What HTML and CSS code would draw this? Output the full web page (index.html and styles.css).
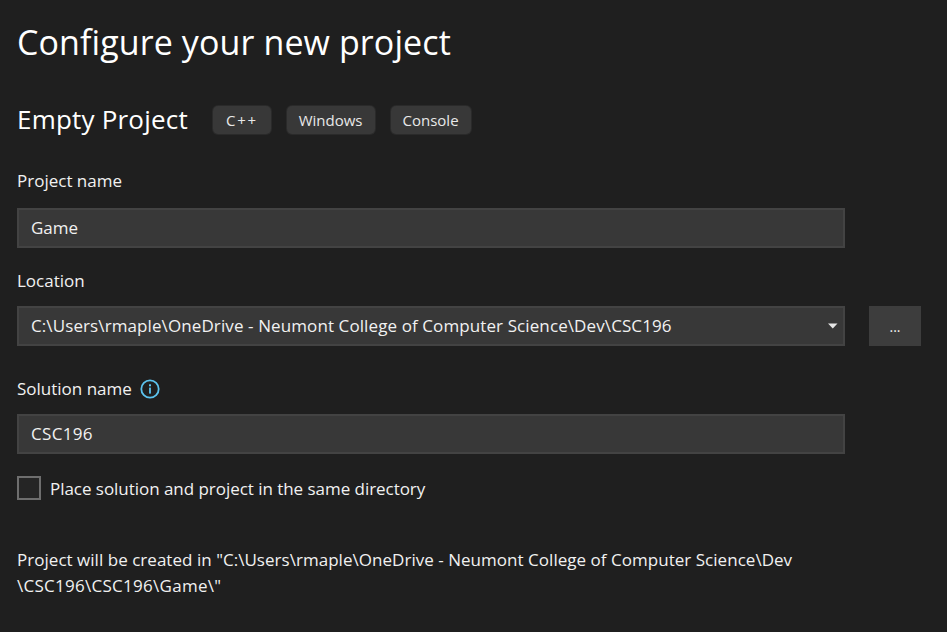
FILE: index.html
```html
<!DOCTYPE html>
<html lang="en">
<head>
<meta charset="utf-8">
<title>Configure your new project</title>
<link rel="stylesheet" href="styles.css">
</head>
<body>
<main class="page">
  <h1 class="title">Configure your new project</h1>
  <div class="template">
    <h2 class="template-name">Empty Project</h2>
    <ul class="tags">
      <li class="tag tag-cpp">C++</li>
      <li class="tag">Windows</li>
      <li class="tag">Console</li>
    </ul>
  </div>
  <div class="label label-project">Project name</div>
  <div class="field field-wide">Game</div>
  <div class="label label-location">Location</div>
  <div class="location-row">
    <div class="field field-wide field-select">
      <span class="path">C:\Users\rmaple\OneDrive - Neumont College of Computer Science\Dev\CSC196</span>
      <svg class="caret" width="10" height="6" viewBox="0 0 10 6"><path d="M0 0.5H9.5L4.75 5.5Z" fill="#e6e6e6"/></svg>
    </div>
    <button class="browse" type="button">...</button>
  </div>
  <div class="label label-solution">
    <span>Solution name</span>
    <svg class="info" width="20" height="20" viewBox="0 0 20 20">
      <circle cx="10" cy="10" r="8.7" fill="none" stroke="#5cc3ee" stroke-width="1.8"/>
      <rect x="9.1" y="8.6" width="1.8" height="6" fill="#5cc3ee"/>
      <rect x="9" y="5.3" width="2" height="2" fill="#5cc3ee"/>
    </svg>
  </div>
  <div class="field field-wide field-solution">CSC196</div>
  <label class="check-row">
    <span class="checkbox"></span>
    <span>Place solution and project in the same directory</span>
  </label>
  <p class="summary">Project will be created in "C:\Users\rmaple\OneDrive - Neumont College of Computer Science\Dev<br><span class="summary-tail">\CSC196\CSC196\Game\"</span></p>
</main>
</body>
</html>
```
FILE: styles.css
```css
* { box-sizing: border-box; }
html, body { margin: 0; height: 100%; }
body {
  background: #1f1f1f;
  color: #f1f1f1;
  font-family: "Open Sans", "Noto Sans", "Liberation Sans", sans-serif;
  font-size: 17px;
  overflow: hidden;
}
.page { padding: 19px 26px 0 17px; }
.title {
  margin: 0;
  font-size: 34px;
  line-height: 46px;
  font-weight: 400;
  color: #fff;
  letter-spacing: 0.1px;
}
.template { display: flex; align-items: center; margin-top: 37px; height: 34px; }
.template-name {
  margin: 0;
  font-size: 26px;
  line-height: 34px;
  font-weight: 400;
  color: #fff;
  letter-spacing: 0.2px;
  width: 196px;
}
.tags { display: flex; gap: 16px; list-style: none; margin: 1px 0 0; padding: 0; }
.tag {
  height: 28px;
  padding: 0 12px;
  background: #383838;
  border-radius: 5px;
  font-size: 15px;
  line-height: 28px;
  color: #e8e8e8;
  box-shadow: 0 0 0 1px #2a2a2a;
}
.tag-cpp { letter-spacing: 1.8px; padding: 0 12.7px 0 13px; }
.label {
  font-size: 17px;
  line-height: 22px;
  color: #f1f1f1;
}
.label-project { margin-top: 34px; }
.label-location { margin-top: 22px; }
.label-solution { margin-top: 32px; display: flex; align-items: center; gap: 8px; }
.field {
  height: 40px;
  background: #383838;
  border: 2px solid #434343;
  padding: 0 12px;
  line-height: 36px;
  font-size: 17px;
  color: #f1f1f1;
  white-space: nowrap;
}
.path { letter-spacing: 0.1px; }
.field-solution { letter-spacing: 0.3px; }
.field-wide { width: 828px; }
.label + .field { margin-top: 16px; }
.label-solution + .field { margin-top: 14px; }
.label-location + .location-row { margin-top: 14px; }
.location-row { display: flex; gap: 24px; }
.field-select { display: flex; align-items: center; justify-content: space-between; padding-right: 5px; }
.caret { display: block; }
.browse {
  width: 52px;
  height: 40px;
  background: #3d3d3d;
  border: 0;
  padding: 0;
  color: #f1f1f1;
  font-family: inherit;
  font-size: 14px;
}
.check-row { display: flex; align-items: center; gap: 9px; margin-top: 19px; height: 30px; letter-spacing: -0.04px; }
.checkbox { width: 24px; height: 24px; border: 2px solid #6e6e6e; background: #252525; }
.summary {
  margin: 44px 0 0;
  font-size: 17px;
  line-height: 26px;
  letter-spacing: 0.03px;
  color: #f1f1f1;
}
.summary-tail { letter-spacing: 0.27px; }
```
